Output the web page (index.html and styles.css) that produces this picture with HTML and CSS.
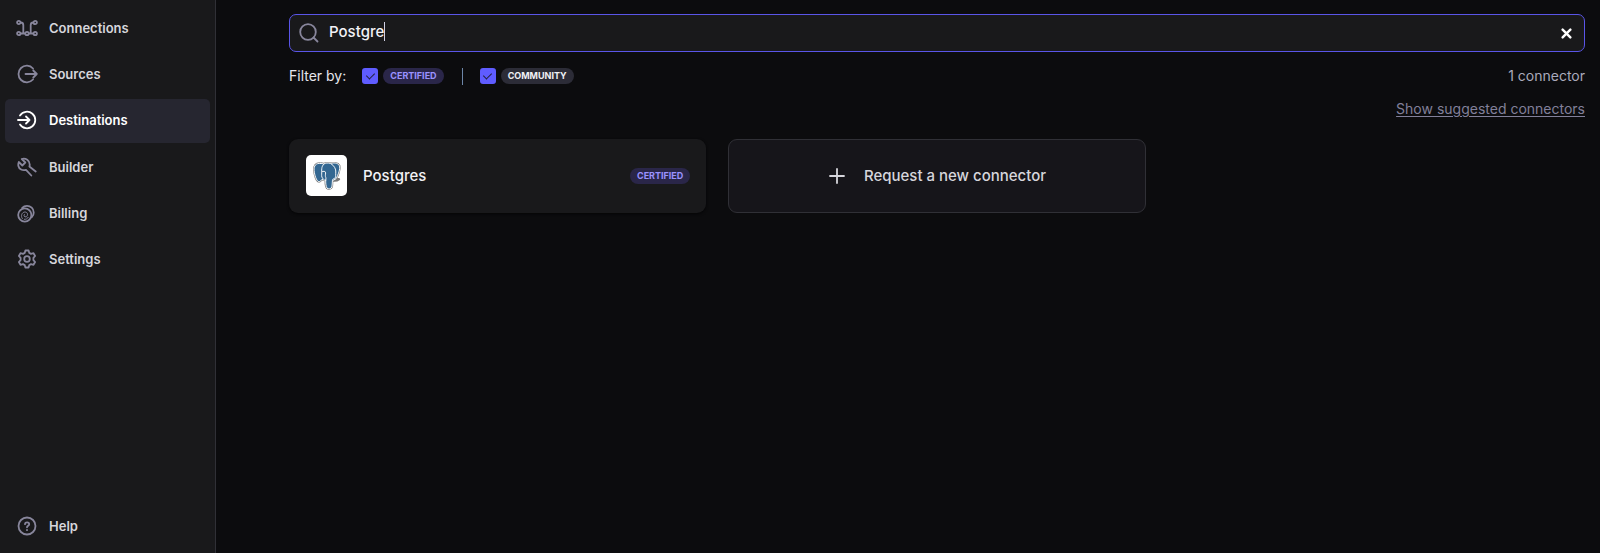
FILE: index.html
```html
<!DOCTYPE html>
<html lang="en">
<head>
<meta charset="utf-8">
<meta name="viewport" content="width=device-width, initial-scale=1">
<title>Destinations</title>
<link rel="stylesheet" href="styles.css">
</head>
<body>
<div class="app">
  <aside class="sidebar">
    <nav class="nav" aria-label="Main">
      <a class="nav-item" href="#connections">
        <svg class="nav-icon" viewBox="0 0 22 20" aria-hidden="true"><circle cx="2.800" cy="4.500" r="1.700"/><circle cx="19.200" cy="4.500" r="1.700"/><circle cx="2.800" cy="15.500" r="1.700"/><circle cx="11" cy="15.500" r="1.700"/><circle cx="19.200" cy="15.500" r="1.700"/><path d="M4.700 4.500C7 4.500 7.300 5.500 7.300 7V15.500M17.300 4.500C15 4.500 14.700 5.500 14.700 7V15.500M4.700 15.500h4.400M12.900 15.500h4.400"/></svg>
        Connections
      </a>
      <a class="nav-item" href="#sources">
        <svg class="nav-icon" viewBox="0 0 22 20" aria-hidden="true"><path d="M17 4.500A8.300 8.300 0 1 0 17 15.500M9.500 10h11.300M17.300 6.500L20.800 10l-3.500 3.500"/></svg>
        Sources
      </a>
      <a class="nav-item nav-item-active" href="#destinations" aria-current="page">
        <svg class="nav-icon" viewBox="0 0 22 20" aria-hidden="true"><path d="M4 5.500A8.300 8.300 0 1 1 4 14.500M2 10h11.500M10 6.500l3.500 3.500L10 13.500"/></svg>
        Destinations
      </a>
      <a class="nav-item" href="#builder">
        <svg class="nav-icon" viewBox="0 0 22 20" aria-hidden="true"><path d="M15.300 18.500L10 12.800C6.500 14 3 12 2.400 9 2.100 7.600 2.300 6.300 2.800 5L6.300 8.500 9.300 5.500 5.800 2C9.500.700 14 3.500 13.700 8 13.700 8.600 13.600 9 13.400 9.500L19.700 14.500"/></svg>
        Builder
      </a>
      <a class="nav-item" href="#billing">
        <svg class="nav-icon" viewBox="0 0 22 20" aria-hidden="true"><circle cx="8.800" cy="12" r="6.600"/><path d="M6.200 4.800A6.700 6.700 0 1 1 15.800 14.200"/><path class="thin" d="M6.300 15.500C4.500 13 5.800 9.300 8.800 9 11.800 8.800 12.300 12.500 10.300 13.800 8.300 14.500 7.300 12.500 8.300 11.500M8.300 16.300c1.700.200 3.200-.600 3.900-2"/></svg>
        Billing
      </a>
      <a class="nav-item" href="#settings">
        <svg class="nav-icon" viewBox="0 0 22 20" aria-hidden="true"><circle cx="11" cy="10" r="2.800"/><path d="M9.400 1.500h3.200l.700 2.400 1.700 1 2.500-.700 1.600 2.800-1.700 1.900v2.200l1.700 1.900-1.600 2.800-2.500-.700-1.700 1-.700 2.400H9.400l-.700-2.400-1.700-1-2.500.700-1.600-2.800 1.700-1.900V8.900L2.900 7l1.600-2.800 2.500.700 1.700-1z"/></svg>
        Settings
      </a>
    </nav>
    <button class="nav-item" type="button">
      <svg class="nav-icon" viewBox="0 0 22 20" aria-hidden="true"><circle cx="11" cy="10" r="8.500"/><path d="M9 8.200C9 5.600 13.200 5.700 13.200 8.200 13.200 9.700 11 9.700 11 11.300M11 13.800v.400"/></svg>
      Help
    </button>
  </aside>

  <main class="main">
    <div class="search">
      <svg class="search-icon" viewBox="0 0 20 20" aria-hidden="true"><circle cx="9" cy="9" r="7.800"/><path d="M14.500 14.500L18.500 18.500"/></svg>
      <div class="search-field">
        <input class="search-input" type="text" value="Postgre" aria-label="Search connectors">
        <span class="caret" aria-hidden="true"></span>
      </div>
      <button class="clear" type="button" aria-label="Clear search"><svg viewBox="0 0 10 10" aria-hidden="true"><path d="M1.500 1.500l7 7M8.500 1.500l-7 7"/></svg></button>
    </div>

    <div class="filters">
      <span class="filters-title">Filter by:</span>
      <label class="filter"><input class="check" type="checkbox" checked><span class="badge badge-certified">CERTIFIED</span></label>
      <span class="divider"></span>
      <label class="filter"><input class="check" type="checkbox" checked><span class="badge badge-community">COMMUNITY</span></label>
      <span class="count">1 connector</span>
    </div>

    <a class="suggested" href="#suggested">Show suggested connectors</a>

    <div class="cards">
      <button class="card" type="button">
        <span class="logo">
          <svg viewBox="0 0 30 30" aria-hidden="true">
            <path class="pg-edge" d="M8 1.500C3 1 .800 4 1.200 9c.400 5 2.500 11.500 5 12 1.500.200 2.500-1.300 3.500-2.500 1.200 1 2.800 1 4 .800-.300 2.500.100 7 1.300 8.700 1.200 1.400 4.500.900 5.200-1.200.500-1.800.300-4.500.600-6.800 2.500.300 5.700-.200 7.200-1.600-1-.600-2.700-.200-3.400-.500C27 14 29.500 7 28.300 4 26.500.500 21.500.700 19 1.600 16 .800 13.500 1 11.500 2.100 10.300 1.600 9 1.500 8 1.500z"/>
            <path class="pg-body" d="M8 1.500C3 1 .800 4 1.200 9c.400 5 2.500 11.500 5 12 1.500.200 2.500-1.300 3.500-2.500 1.200 1 2.800 1 4 .800-.300 2.500.100 7 1.300 8.700 1.200 1.400 4.500.900 5.200-1.200.500-1.800.300-4.500.600-6.800 1-.400 2-.900 3.800-2.100C27 14 29.500 7 28.300 4 26.500.500 21.500.700 19 1.600 16 .800 13.500 1 11.500 2.100 10.300 1.600 9 1.500 8 1.500z"/>
            <path class="pg-line" d="M11.500 2.500C8.500 5 9.500 9 9.300 13c-.200 2.500.200 4 1.500 5M9.500 10.500c1.500-1 4-.800 4 1.200 0 2-.700 3.300.200 4.800.300 1 .300 2 0 3M19.500 2c3.500 2 5.200 6 4.900 8.700-.200 3 .300 4-.700 6.500M20.800 19.500c-.100-1 .700-1.500 2-1.700"/>
          </svg>
        </span>
        <span class="card-name">Postgres</span>
        <span class="badge badge-certified">CERTIFIED</span>
      </button>
      <button class="card card-request" type="button">
        <svg class="plus" viewBox="0 0 16 16" aria-hidden="true"><path d="M8 1v14M1 8h14"/></svg>
        <span class="card-name">Request a new connector</span>
      </button>
    </div>
  </main>
</div>
</body>
</html>
```
FILE: styles.css
```css
* { box-sizing: border-box; }

body {
  margin: 0;
  background: #0c0c0e;
  color: #e6e6ec;
  font-family: Inter, "Liberation Sans", sans-serif;
  font-size: 14px;
  line-height: 20px;
}

button, input { font: inherit; color: inherit; }
svg { fill: none; stroke: currentColor; stroke-linecap: round; stroke-linejoin: round; }

.app { display: flex; min-height: 100vh; }

.sidebar {
  display: flex;
  flex-direction: column;
  justify-content: space-between;
  flex: 0 0 216px;
  padding: 6px 5px 5px;
  background: #19191b;
  border-right: 1px solid #303036;
}

.nav {
  display: flex;
  flex-direction: column;
  justify-content: space-between;
  min-height: 276px;
}

.nav-item {
  display: flex;
  align-items: center;
  gap: 10px;
  width: 100%;
  height: 44px;
  padding: 0 11px 1px;
  border: 0;
  border-radius: 5px;
  background: none;
  color: #d6d6dc;
  font-size: 13px;
  font-weight: 700;
  text-decoration: none;
  cursor: pointer;
}
.nav-item-active { background: #262630; color: #fff; }

.nav-icon { width: 22px; height: 20px; stroke: #88869c; stroke-width: 1.8; }
.nav-icon .thin { stroke-width: 1; }
.nav-item-active .nav-icon { stroke: #fff; }

.nav-item { font-weight: 600; gap: 11px; }

.main {
  flex: 1;
  min-width: 0;
  padding: 14px 15px 20px 73px;
}

.search {
  display: flex;
  align-items: center;
  height: 38px;
  padding: 0 12px 0 9px;
  border: 1px solid #5a55e8;
  border-radius: 7px;
  background: #19191b;
}
.search-icon { width: 20px; height: 20px; stroke: #88869c; stroke-width: 1.8; }
.search-field { position: relative; flex: 1; margin-left: 10px; }
.search-input {
  display: block;
  width: 100%;
  padding: 0 0 2px;
  border: 0;
  outline: 0;
  background: none;
  color: #f2f2f6;
  font-size: 15px;
  font-weight: 500;
}
.caret {
  position: absolute;
  top: 0;
  left: 55px;
  width: 1px;
  height: 19px;
  background: #d0d0e4;
}
.clear {
  display: flex;
  padding: 0;
  border: 0;
  background: none;
  color: #fff;
  cursor: pointer;
}
.clear svg { width: 11px; height: 11px; stroke-width: 2.2; }

.filters { display: flex; align-items: center; margin-top: 14px; }
.filters-title { margin-right: 16px; }
.filter { display: flex; align-items: center; gap: 5px; }

.check {
  appearance: none;
  display: flex;
  justify-content: center;
  width: 16px;
  height: 16px;
  margin: 0;
  border-radius: 3px;
  background: #5f5cff;
}
.check:checked::after {
  content: "";
  width: 4px;
  height: 7px;
  margin-top: 3px;
  border: solid #20203a;
  border-width: 0 1px 1px 0;
  transform: rotate(45deg);
}

.badge {
  padding: 0 7px;
  border-radius: 8px;
  font-size: 9px;
  font-weight: 700;
  line-height: 16px;
}
.badge-certified { background: #2a2649; color: #9a92ff; }
.badge-community { background: #2c2c37; color: #f0f0f4; }

.divider { width: 1px; height: 17px; margin: 0 17px 0 18px; background: #6d86a8; }
.count { margin-left: auto; color: #aaaabc; }

.suggested {
  display: block;
  width: fit-content;
  margin: 13px 0 0 auto;
  color: #82809a;
  text-underline-offset: 2px;
}

.cards {
  display: grid;
  grid-template-columns: repeat(3, minmax(0, 1fr));
  gap: 22px;
  margin-top: 20px;
}
.card {
  display: flex;
  align-items: center;
  height: 74px;
  padding: 0 16px 1px 17px;
  border: 0;
  border-radius: 9px;
  background: #19191b;
  box-shadow: 0 1px 3px #050506;
  color: #f2f2f6;
  font-size: 15px;
  cursor: pointer;
}
.card .badge { margin-left: auto; }
.card-name { font-weight: 500; }
.logo {
  display: flex;
  align-items: center;
  justify-content: center;
  width: 41px;
  height: 41px;
  margin-right: 16px;
  border-radius: 5px;
  background: #fff;
}
.logo svg { width: 28px; height: 28px; overflow: visible; }
.pg-edge { stroke: #777; stroke-width: 2.2; fill: #fff; }
.pg-body { fill: #336791; stroke: #fff; stroke-width: 1; }
.pg-line { stroke: #fff; stroke-width: 1; }

.card-request {
  justify-content: center;
  gap: 19px;
  border: 1px solid #303036;
  background: #16151a;
  box-shadow: none;
  color: #d6d6dc;
}
.plus { width: 16px; height: 16px; stroke-width: 1.8; }
```
